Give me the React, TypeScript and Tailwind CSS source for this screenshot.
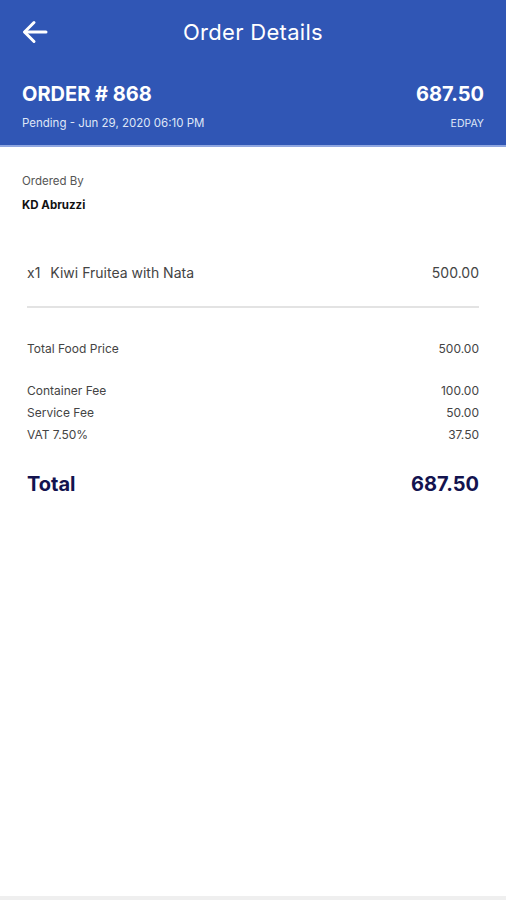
const fees = [
  { label: 'Container Fee', value: '100.00' },
  { label: 'Service Fee', value: '50.00' },
  { label: 'VAT 7.50%', value: '37.50' },
]

export default function App() {
  return (
    <div className="min-h-[900px] w-[506px] bg-white flex flex-col font-['Inter',sans-serif]">
      <header className="bg-[#3056b5] px-[22px] pt-[17px] pb-[13px] border-b-2 border-[#8fa6e0]">
        <div className="relative flex items-center justify-center h-[30px]">
          <button className="absolute left-0 top-[2px] text-white">
            <svg width="26" height="26" viewBox="0 0 26 26" fill="none" stroke="currentColor" strokeWidth="3" strokeLinecap="round" strokeLinejoin="round">
              <path d="M24 13H3" />
              <path d="M12 3.5 2.5 13l9.5 9.5" />
            </svg>
          </button>
          <h1 className="text-white text-[22px] font-normal tracking-[0.3px]">Order Details</h1>
        </div>
        <div className="mt-[34px] flex justify-between items-start">
          <div>
            <div className="text-white text-[20px] font-bold leading-[26px]">ORDER # 868</div>
            <div className="text-[#dfe6f7] text-[11.5px] mt-[8px]">Pending - Jun 29, 2020 06:10 PM</div>
          </div>
          <div className="text-right">
            <div className="text-white text-[20px] font-bold leading-[26px]">687.50</div>
            <div className="text-[#dfe6f7] text-[10.5px] mt-[9px]">EDPAY</div>
          </div>
        </div>
      </header>

      <section className="px-[22px] pt-[26px]">
        <div className="text-[#555] text-[11.5px]">Ordered By</div>
        <div className="text-[#111] text-[11.5px] font-bold mt-[6px]">KD Abruzzi</div>
      </section>

      <section className="px-[27px] pt-[48px]">
        <div className="flex justify-between items-center text-[14px] text-[#444]">
          <div className="flex gap-[10px]">
            <span>x1</span>
            <span>Kiwi Fruitea with Nata</span>
          </div>
          <span>500.00</span>
        </div>
        <div className="h-[2px] bg-[#e3e3e3] mt-[23px]" />

        <div className="flex justify-between text-[12px] text-[#444] mt-[32px]">
          <span>Total Food Price</span>
          <span>500.00</span>
        </div>

        <div className="mt-[24px] flex flex-col gap-[4px]">
          {fees.map(f => (
            <div key={f.label} className="flex justify-between text-[12px] text-[#444] leading-[18px]">
              <span>{f.label}</span>
              <span>{f.value}</span>
            </div>
          ))}
        </div>

        <div className="flex justify-between items-center mt-[25px] text-[#13134f] text-[20px] font-bold">
          <span>Total</span>
          <span>687.50</span>
        </div>
      </section>

      <div className="flex-1" />
      <div className="h-[4px] bg-[#efefef]" />
    </div>
  )
}
